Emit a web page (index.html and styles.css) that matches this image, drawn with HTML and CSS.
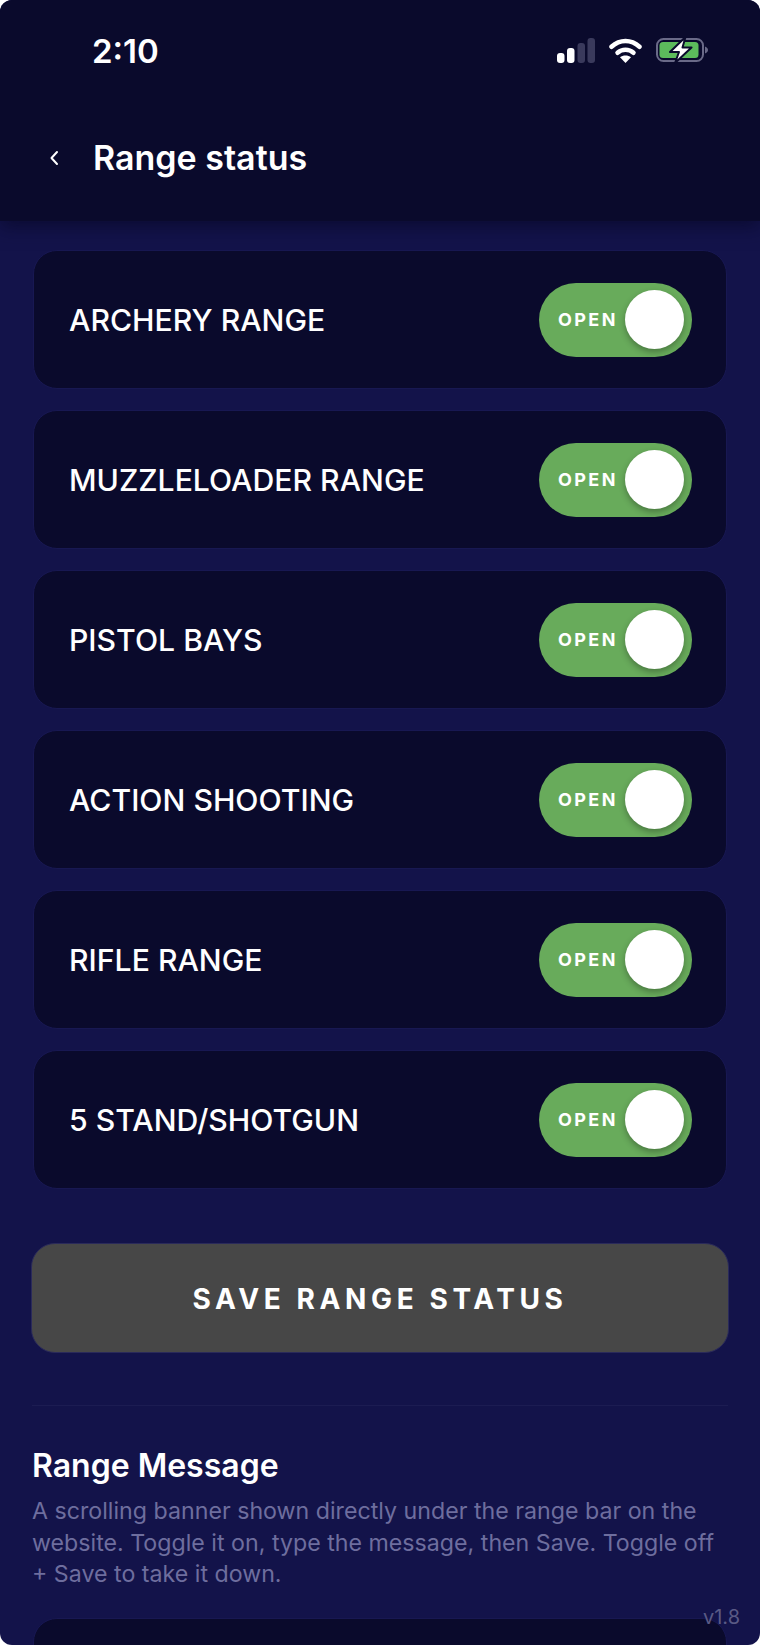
FILE: index.html
```html
<!DOCTYPE html>
<html lang="en">
<head>
<meta charset="utf-8">
<title>Range status</title>
<link rel="stylesheet" href="styles.css">
</head>
<body>
<div class="screen">
  <header class="top">
    <div class="status">
      <span class="time">2:10</span>
      <div class="status-icons">
        <svg class="signal" width="38" height="25" viewBox="0 0 38 25"><rect x="0" y="15" width="7.500" height="10" rx="3" fill="#fff"/><rect x="10" y="10" width="7.500" height="15" rx="3" fill="#fff"/><rect x="20.500" y="5" width="7.500" height="20" rx="3" fill="#3a3a5c"/><rect x="30.500" y="0" width="7.500" height="25" rx="3" fill="#3a3a5c"/></svg>
        <svg class="wifi" width="33" height="25" viewBox="0 0 33 25"><path d="M2.500 8.800C11 1.200 22 1.200 30.500 8.800" fill="none" stroke="#fff" stroke-width="4.500" stroke-linecap="round"/><path d="M8.500 14.800C13 10.800 20 10.800 24.500 14.800" fill="none" stroke="#fff" stroke-width="4.500" stroke-linecap="round"/><path d="M11 19.300C14 16.800 19 16.800 22 19.300L16.500 25Z" fill="#fff"/></svg>
        <svg class="battery" width="52" height="28" viewBox="0 0 52 28"><rect x="1" y="3" width="46" height="22" rx="6.500" fill="none" stroke="#6a6a88" stroke-width="2"/><rect x="3.500" y="6" width="39" height="16" rx="3.500" fill="#5cbb5c"/><path d="M49 10.500C51 11.200 52 12.500 52 14C52 15.500 51 16.800 49 17.500Z" fill="#6a6a88"/><path d="M29.500 1L14 16H23L19 27L35.500 11.500H26.500Z" fill="#fff" stroke="#0a0a2c" stroke-width="2" stroke-linejoin="round"/></svg>
      </div>
    </div>
    <div class="nav">
      <svg class="back" width="12" height="20" viewBox="0 0 12 20"><path d="M9 4L3.500 10L9 16" fill="none" stroke="#fff" stroke-width="2" stroke-linecap="round" stroke-linejoin="round"/></svg>
      <h1 class="title">Range status</h1>
    </div>
  </header>
  <main class="content">
    <section class="ranges">
      <div class="card"><span class="name">ARCHERY RANGE</span><div class="toggle"><span class="toggle-label">OPEN</span><span class="knob"></span></div></div>
      <div class="card"><span class="name">MUZZLELOADER RANGE</span><div class="toggle"><span class="toggle-label">OPEN</span><span class="knob"></span></div></div>
      <div class="card"><span class="name">PISTOL BAYS</span><div class="toggle"><span class="toggle-label">OPEN</span><span class="knob"></span></div></div>
      <div class="card"><span class="name">ACTION SHOOTING</span><div class="toggle"><span class="toggle-label">OPEN</span><span class="knob"></span></div></div>
      <div class="card"><span class="name">RIFLE RANGE</span><div class="toggle"><span class="toggle-label">OPEN</span><span class="knob"></span></div></div>
      <div class="card"><span class="name">5 STAND/SHOTGUN</span><div class="toggle"><span class="toggle-label">OPEN</span><span class="knob"></span></div></div>
    </section>
    <button class="save">SAVE RANGE STATUS</button>
    <hr class="divider">
    <h2 class="msg-title">Range Message</h2>
    <p class="msg-text">A scrolling banner shown directly under the range bar on the website. Toggle it on, type the message, then Save. Toggle off + Save to take it down.</p>
    <div class="msg-card"></div>
  </main>
  <span class="version">v1.8</span>
</div>
</body>
</html>
```
FILE: styles.css
```css
* { box-sizing: border-box; }
html, body { margin: 0; height: 100%; background: #fff; }
body { font-family: Inter, "Liberation Sans", sans-serif; }
.screen {
  position: relative;
  width: 760px;
  height: 1645px;
  overflow: hidden;
  border-radius: 12px;
  background: #13134a;
  color: #fff;
}
.top {
  height: 221px;
  background: #0a0a2c;
  box-shadow: 0 6px 16px rgba(10, 10, 44, 0.75);
  position: relative;
}
.status {
  height: 100px;
  display: flex;
  justify-content: space-between;
  padding: 31px 52px 0 92px;
}
.time { font-size: 33px; font-weight: 600; line-height: 40px; }
.status-icons { display: flex; align-items: center; gap: 14px; height: 38px; }
.nav { display: flex; align-items: center; height: 60px; padding-left: 48px; margin-top: 28px; }
.back { margin-right: 33px; }
.title { margin: 0; font-size: 34px; font-weight: 600; line-height: 40px; }
.content { padding: 29px 32px 0; }
.ranges { display: flex; flex-direction: column; gap: 21px; padding: 0 1px; }
.card {
  height: 139px;
  border-radius: 24px;
  background: #0a0a2c;
  border: 1px solid #181852;
  display: flex;
  align-items: center;
  justify-content: space-between;
  padding: 0 34px 0 35px;
}
.name { font-size: 30.200px; font-weight: 500; }
.toggle {
  width: 153px;
  height: 74px;
  border-radius: 37px;
  background: #68ab5b;
  display: flex;
  align-items: center;
  justify-content: space-between;
  padding: 0 8px 0 19px;
}
.toggle-label { font-size: 18px; font-weight: 700; letter-spacing: 2.400px; }
.knob {
  width: 59px;
  height: 59px;
  border-radius: 50%;
  background: #fff;
  box-shadow: 0 3px 6px rgba(0, 0, 0, 0.3);
}
.save {
  display: block;
  width: 698px;
  height: 110px;
  margin: 54px 0 0 -1px;
  padding-top: 3px;
  border: 1px solid #2a2a5a;
  border-radius: 24px;
  background: #474747;
  color: #fff;
  font-family: inherit;
  font-size: 28px;
  font-weight: 700;
  letter-spacing: 4.600px;
}
.divider { border: 0; border-top: 1px solid #1c1c52; margin: 52px 0 0; }
.msg-title { margin: 40px 0 0; font-size: 32px; font-weight: 600; line-height: 40px; }
.msg-text { margin: 10px 10px 0 0; font-size: 23.200px; line-height: 31.500px; color: #6e6e9e; }
.msg-card {
  height: 80px;
  margin: 27px 1px 0;
  border-radius: 24px;
  background: #0a0a2c;
  border: 1px solid #181852;
}
.version { position: absolute; right: 20px; bottom: 16px; font-size: 20px; line-height: 24px; color: #5a5a85; }
```
